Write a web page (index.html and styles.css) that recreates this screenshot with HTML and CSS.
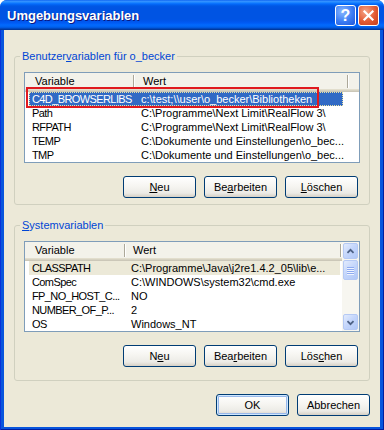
FILE: index.html
```html
<!DOCTYPE html>
<html lang="de">
<head>
  <meta charset="UTF-8" />
  <title>Umgebungsvariablen</title>
  <link rel="stylesheet" href="styles.css">
</head>
<body>

<div class="window">
  <div class="titlebar">
    <div class="title">Umgebungsvariablen</div>
    <div class="tb-btn tb-help">?</div>
    <div class="tb-btn tb-close">
      <svg width="13" height="13" viewBox="0 0 13 13">
        <path d="M2.5 2.5 L10.5 10.5 M10.5 2.5 L2.5 10.5" stroke="#fff" stroke-width="2.2" stroke-linecap="square"/>
      </svg>
    </div>
  </div>

  <div class="frame">
    <div class="client">

      <!-- Benutzervariablen -->
      <fieldset class="group group-user">
        <legend>Benutzer<u>v</u>ariablen für o_becker</legend>
        <div class="listview list-user">
          <div class="lv-head">
            <div class="lv-col col-a">Variable</div>
            <div class="lv-sep"></div>
            <div class="lv-col col-b">Wert</div>
            <div class="lv-sep"></div>
          </div>
          <div class="lv-row selected">
            <div class="cell c1">C4D_BROWSERLIBS</div>
            <div class="cell c2">c:\test;\\user\o_becker\Bibliotheken</div>
          </div>
          <div class="lv-row">
            <div class="cell c1">Path</div>
            <div class="cell c2">C:\Programme\Next Limit\RealFlow 3\</div>
          </div>
          <div class="lv-row">
            <div class="cell c1">RFPATH</div>
            <div class="cell c2">C:\Programme\Next Limit\RealFlow 3\</div>
          </div>
          <div class="lv-row">
            <div class="cell c1">TEMP</div>
            <div class="cell c2">C:\Dokumente und Einstellungen\o_bec...</div>
          </div>
          <div class="lv-row">
            <div class="cell c1">TMP</div>
            <div class="cell c2">C:\Dokumente und Einstellungen\o_bec...</div>
          </div>
          <div class="mark"></div>
        </div>
        <div class="btn-row">
          <button class="btn"><u>N</u>eu</button>
          <button class="btn">Be<u>a</u>rbeiten</button>
          <button class="btn"><u>L</u>öschen</button>
        </div>
      </fieldset>

      <!-- Systemvariablen -->
      <fieldset class="group group-sys">
        <legend><u>S</u>ystemvariablen</legend>
        <div class="listview list-sys">
          <div class="lv-main">
            <div class="lv-head">
              <div class="lv-col col-a">Variable</div>
              <div class="lv-sep"></div>
              <div class="lv-col col-b">Wert</div>
              <div class="lv-sep"></div>
            </div>
            <div class="lv-row inactive">
              <div class="cell c1">CLASSPATH</div>
              <div class="cell c2">C:\Programme\Java\j2re1.4.2_05\lib\e...</div>
            </div>
            <div class="lv-row">
              <div class="cell c1">ComSpec</div>
              <div class="cell c2">C:\WINDOWS\system32\cmd.exe</div>
            </div>
            <div class="lv-row">
              <div class="cell c1">FP_NO_HOST_C...</div>
              <div class="cell c2">NO</div>
            </div>
            <div class="lv-row">
              <div class="cell c1">NUMBER_OF_P...</div>
              <div class="cell c2">2</div>
            </div>
            <div class="lv-row">
              <div class="cell c1">OS</div>
              <div class="cell c2">Windows_NT</div>
            </div>
          </div>
          <div class="scrollbar">
            <div class="sb-btn">
              <svg width="15" height="15" viewBox="0 0 15 15"><path d="M4 9 L7.5 5.5 L11 9" fill="none" stroke="#4d6185" stroke-width="2"/></svg>
            </div>
            <div class="sb-thumb">
              <span></span><span></span><span></span><span></span>
            </div>
            <div class="sb-btn sb-down">
              <svg width="15" height="15" viewBox="0 0 15 15"><path d="M4 6 L7.5 9.5 L11 6" fill="none" stroke="#4d6185" stroke-width="2"/></svg>
            </div>
          </div>
        </div>
        <div class="btn-row">
          <button class="btn">N<u>e</u>u</button>
          <button class="btn">Bea<u>r</u>beiten</button>
          <button class="btn">Lös<u>c</u>hen</button>
        </div>
      </fieldset>

      <div class="btn-row dialog-buttons">
        <button class="btn btn-default">OK</button>
        <button class="btn">Abbrechen</button>
      </div>

    </div>
  </div>
</div>

</body>
</html>
```

FILE: styles.css
```css
* {
  box-sizing: border-box;
}

body {
  margin: 0;
  background: #fff;
  font-family: "Liberation Sans", Arial, sans-serif;
  font-size: 11px;
  color: #000;
}

.window {
  width: 384px;
  height: 430px;
  display: flex;
  flex-direction: column;
  border-radius: 7px 7px 0 0;
  overflow: hidden;
  background: #0855dd;
}

/* Title bar */
.titlebar {
  flex: none;
  height: 30px;
  display: flex;
  align-items: center;
  padding: 1px 5px 0 7px;
  background: linear-gradient(to bottom,
    #0058ee 0, #3a93ff 1px, #288eff 2px, #127dff 3px, #0369fc 4px,
    #0262ee 5px, #0057e5 6px, #0054e3 8px, #0054e3 19px, #0055eb 21px,
    #005bf5 23px, #026afe 25px, #0062ef 27px, #0052d6 28px, #0040ab 29px, #003092 30px);
}

.title {
  flex: 1;
  color: #fff;
  font-weight: bold;
  font-size: 13px;
  text-shadow: 1px 1px 0 #0a1883;
}

.tb-btn {
  width: 21px;
  height: 21px;
  border: 1px solid #fff;
  border-radius: 3px;
  display: flex;
  align-items: center;
  justify-content: center;
  color: #fff;
  font-weight: bold;
  font-size: 16px;
}

.tb-btn + .tb-btn {
  margin-left: 2px;
}

.tb-help {
  background: radial-gradient(circle at 35% 30%, #8ab8ff, #3b7cf4 55%, #1f56d8);
}

.tb-close {
  background: radial-gradient(circle at 35% 30%, #f6a487, #e25a33 55%, #c63e1c);
}

/* Window frame + client area */
.frame {
  flex: 1;
  display: flex;
  padding: 0 4px 3px;
  box-shadow: inset 1px 0 #0831d9, inset -1px 0 #001ea0, inset 0 -1px #001ea0;
}

.client {
  flex: 1;
  display: flex;
  flex-direction: column;
  padding: 0 10px;
  background: #ece9d8;
}

/* Group boxes */
.group {
  margin: 0;
  min-width: 0;
  border: 1px solid #d0d0bf;
  border-radius: 3px;
}

.group legend {
  margin-left: -4px;
  padding: 0 2px;
  line-height: 14px;
  color: #0046d5;
}

.group-user {
  margin-top: 19px;
  padding: 9px 9px 6px;
}

.group-sys {
  margin-top: 13px;
  padding: 9px 9px 13px;
}

/* List views */
.listview {
  position: relative;
  border: 1px solid #7f9db9;
  background: #fff;
}

.list-user {
  height: 91px;
}

.list-sys {
  height: 91px;
  display: flex;
}

.lv-main {
  flex: 1;
  min-width: 0;
}

.lv-head {
  display: flex;
  align-items: center;
  height: 19px;
  background: #f3f2ea;
  box-shadow: inset 0 -1px #cbc7b8, inset 0 -2px #d6d2c2, inset 0 -3px #e2decd;
}

.lv-col {
  line-height: 17px;
  align-self: flex-start;
}

.lv-sep {
  width: 2px;
  height: 13px;
  margin-bottom: 2px;
  border-left: 1px solid #aca899;
  border-right: 1px solid #fff;
}

.list-user .col-a { width: 108px; padding-left: 10px; }
.list-user .col-b { width: 212px; padding-left: 8px; }
.list-sys .col-a { width: 99px; padding-left: 10px; }
.list-sys .col-b { width: 214px; padding-left: 7px; }

.lv-row {
  display: flex;
  height: 14px;
  line-height: 14px;
  margin-left: 4px;
  white-space: nowrap;
}

.list-user .lv-row { width: 314px; }
.list-sys .lv-row { width: 311px; }

.cell {
  padding-left: 3px;
}

/* names are mostly capitals, which run wider than in the original font */
.c1 {
  letter-spacing: -0.6px;
}

.list-user .c1 { width: 104px; flex: none; }
.list-user .c2 { padding-left: 8px; }
.list-sys .c1 { width: 95px; flex: none; }
.list-sys .c2 { padding-left: 7px; }

.lv-row.selected {
  background: #316ac5;
  color: #fff;
  outline: 1px dotted #e9e2a4;
  outline-offset: -1px;
}

.lv-row.inactive {
  background: #ece9d8;
}

/* Red annotation box */
.mark {
  position: absolute;
  left: 1px;
  top: 14px;
  width: 293px;
  height: 21px;
  border: 2px solid #e01a1f;
}

/* Scrollbar */
.scrollbar {
  width: 17px;
  flex: none;
  display: flex;
  flex-direction: column;
  padding: 1px;
  background: #f7f6f0;
}

.sb-btn,
.sb-thumb {
  height: 16px;
  border: 1px solid #b5c9f4;
  border-radius: 2px;
  background: linear-gradient(135deg, #e2ebfd, #c3d5fb 50%, #b1c8f7);
  display: flex;
  align-items: center;
  justify-content: center;
}

.sb-thumb {
  height: 20px;
  margin-top: 1px;
  flex-direction: column;
  gap: 1px;
}

.sb-thumb span {
  width: 7px;
  height: 1px;
  background: #8eaaf0;
  box-shadow: 0 1px #eef4ff;
}

.sb-down {
  margin-top: auto;
}

/* Buttons */
.btn-row {
  display: flex;
  justify-content: flex-end;
  gap: 8px;
  margin-top: 13px;
  padding-right: 2px;
}

.dialog-buttons {
  padding-right: 0;
}

.btn {
  width: 73px;
  height: 22px;
  padding: 0;
  border: 1px solid #003c74;
  border-radius: 3px;
  background: linear-gradient(to bottom, #fff 0, #f6f5f1 45%, #ecebe6 80%, #d6d0c5 100%);
  font-family: inherit;
  font-size: 11px;
  color: #000;
}

.btn-default {
  box-shadow: inset 0 0 0 1px #cee7ff, inset 0 0 0 2px #98b8ea;
}
```
